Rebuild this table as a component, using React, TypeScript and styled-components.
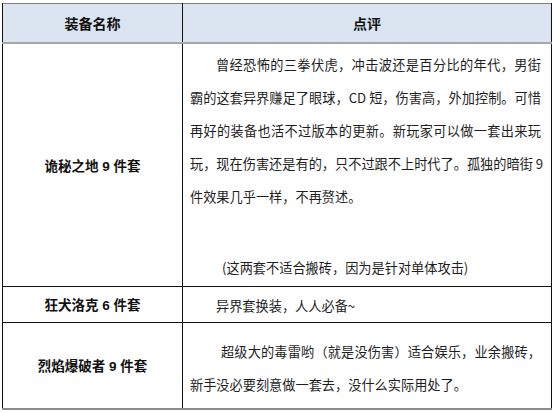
import React from 'react'
import styled, { createGlobalStyle } from 'styled-components'

const GlobalStyle = createGlobalStyle`
  html, body {
    margin: 0;
    padding: 0;
    background: #ffffff;
  }
  body {
    font-family: "Liberation Sans", "Noto Sans CJK SC", sans-serif;
    color: #1e1e1e;
  }
`

// each paragraph keeps the line breaks of the original layout
interface Paragraph {
  lines: string[]
  indent: number
  gapBefore?: number
}

interface Row {
  name: string
  paragraphs: Paragraph[]
  height: number
  padTop: number
}

const rows: Row[] = [
  {
    name: '诡秘之地 9 件套',
    paragraphs: [
      {
        indent: 26,
        lines: [
          '曾经恐怖的三拳伏虎，冲击波还是百分比的年代，男街',
          '霸的这套异界赚足了眼球，CD 短，伤害高，外加控制。可惜',
          '再好的装备也活不过版本的更新。新玩家可以做一套出来玩',
          '玩，现在伤害还是有的，只不过跟不上时代了。孤独的暗街 9',
          '件效果几乎一样，不再赘述。',
        ],
      },
      { indent: 32, gapBefore: 38, lines: ['(这两套不适合搬砖，因为是针对单体攻击)'] },
    ],
    height: 243,
    padTop: 4,
  },
  {
    name: '狂犬洛克 6 件套',
    paragraphs: [{ indent: 26, lines: ['异界套换装，人人必备~'] }],
    height: 35,
    padTop: 2,
  },
  {
    name: '烈焰爆破者 9 件套',
    paragraphs: [
      {
        indent: 31,
        lines: ['超级大的毒雷哟（就是没伤害）适合娱乐，业余搬砖，', '新手没必要刻意做一套去，没什么实际用处了。'],
      },
    ],
    height: 87,
    padTop: 12,
  },
]

const Page = styled.div`
  padding: 3px 2px 0 2px;
`

const Table = styled.table`
  width: 550px;
  border-collapse: collapse;
  table-layout: fixed;
  border-top: 1px solid #7f7f7f;
  border-bottom: 2px solid #8c8c8c;
`

const HeadCell = styled.th<{ $w?: number }>`
  width: ${p => (p.$w ? `${p.$w}px` : 'auto')};
  height: 38px;
  padding: 0;
  background: #dbe5f1;
  border-left: 1px solid #111;
  border-right: 1px solid #111;
  border-bottom: 2px solid #a6a6a6;
  font-size: 14px;
  font-weight: 700;
  color: #111;
  text-align: center;
  vertical-align: middle;
`

const NameCell = styled.td`
  padding: 0;
  border: 1px solid #111;
  border-top: none;
  font-size: 13.5px;
  font-weight: 700;
  color: #111;
  text-align: center;
  vertical-align: middle;
`

const ReviewCell = styled.td<{ $h: number; $pad: number }>`
  height: ${p => p.$h}px;
  box-sizing: border-box;
  padding: ${p => p.$pad}px 10px 0 7px;
  border: 1px solid #111;
  border-top: none;
  vertical-align: top;
  font-family: "Noto Sans CJK SC", "Liberation Sans", sans-serif;
`

const Para = styled.div<{ $gap: number }>`
  margin-top: ${p => p.$gap}px;
`

const Line = styled.div<{ $indent: number; $fill: boolean }>`
  font-size: 13.2px;
  line-height: 33px;
  white-space: nowrap;
  padding-left: ${p => p.$indent}px;
  text-align: ${p => (p.$fill ? 'justify' : 'left')};
  text-align-last: ${p => (p.$fill ? 'justify' : 'left')};
`

export default function App() {
  return (
    <Page>
      <GlobalStyle />
      <Table>
        <thead>
          <tr>
            <HeadCell $w={179}>装备名称</HeadCell>
            <HeadCell>点评</HeadCell>
          </tr>
        </thead>
        <tbody>
          {rows.map(r => (
            <tr key={r.name}>
              <NameCell>{r.name}</NameCell>
              <ReviewCell $h={r.height} $pad={r.padTop}>
                {r.paragraphs.map((p, i) => (
                  <Para key={i} $gap={p.gapBefore ?? 0}>
                    {p.lines.map((t, j) => (
                      <Line key={j} $indent={j === 0 ? p.indent : 0} $fill={j < p.lines.length - 1}>
                        {t}
                      </Line>
                    ))}
                  </Para>
                ))}
              </ReviewCell>
            </tr>
          ))}
        </tbody>
      </Table>
    </Page>
  )
}
